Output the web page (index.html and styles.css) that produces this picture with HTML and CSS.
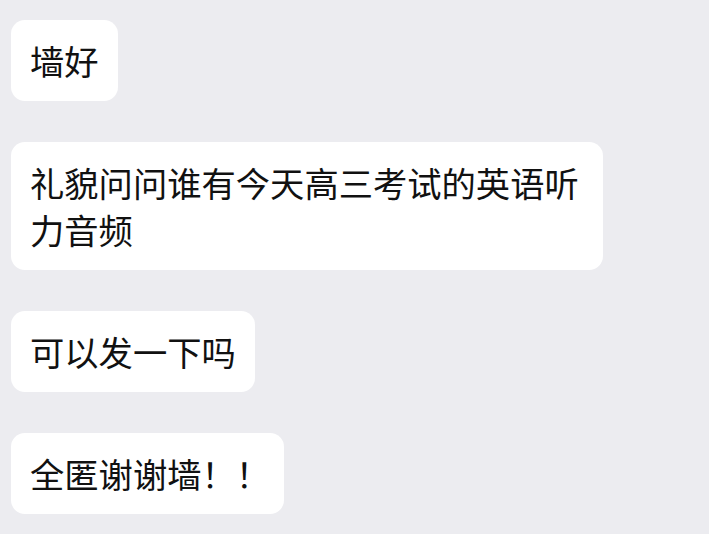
FILE: index.html
```html
<!DOCTYPE html>
<html lang="zh-CN">
<head>
  <meta charset="UTF-8">
  <meta name="viewport" content="width=device-width, initial-scale=1.0">
  <title>聊天</title>
  <link rel="stylesheet" href="styles.css">
</head>
<body>
  <div class="chat">
    <div class="bubble">墙好</div>
    <div class="bubble">礼貌问问谁有今天高三考试的英语听力音频</div>
    <div class="bubble">可以发一下吗</div>
    <div class="bubble short-end">全匿谢谢墙！！</div>
  </div>
</body>
</html>
```

FILE: styles.css
```css
body {
  margin: 0;
  background-color: #ececf0;
  font-family: "Noto Sans CJK SC", "Noto Sans", sans-serif;
  color: #111;
}
.chat {
  display: flex;
  flex-direction: column;
  align-items: flex-start;
  gap: 41px;
  padding: 20px 11px;
}
.bubble {
  background-color: #fff;
  border-radius: 14px;
  padding: 17px 19px;
  font-size: 34.3px;
  line-height: 47px;
  max-width: 554px;
}
.short-end {
  padding-right: 14px;
}
```
